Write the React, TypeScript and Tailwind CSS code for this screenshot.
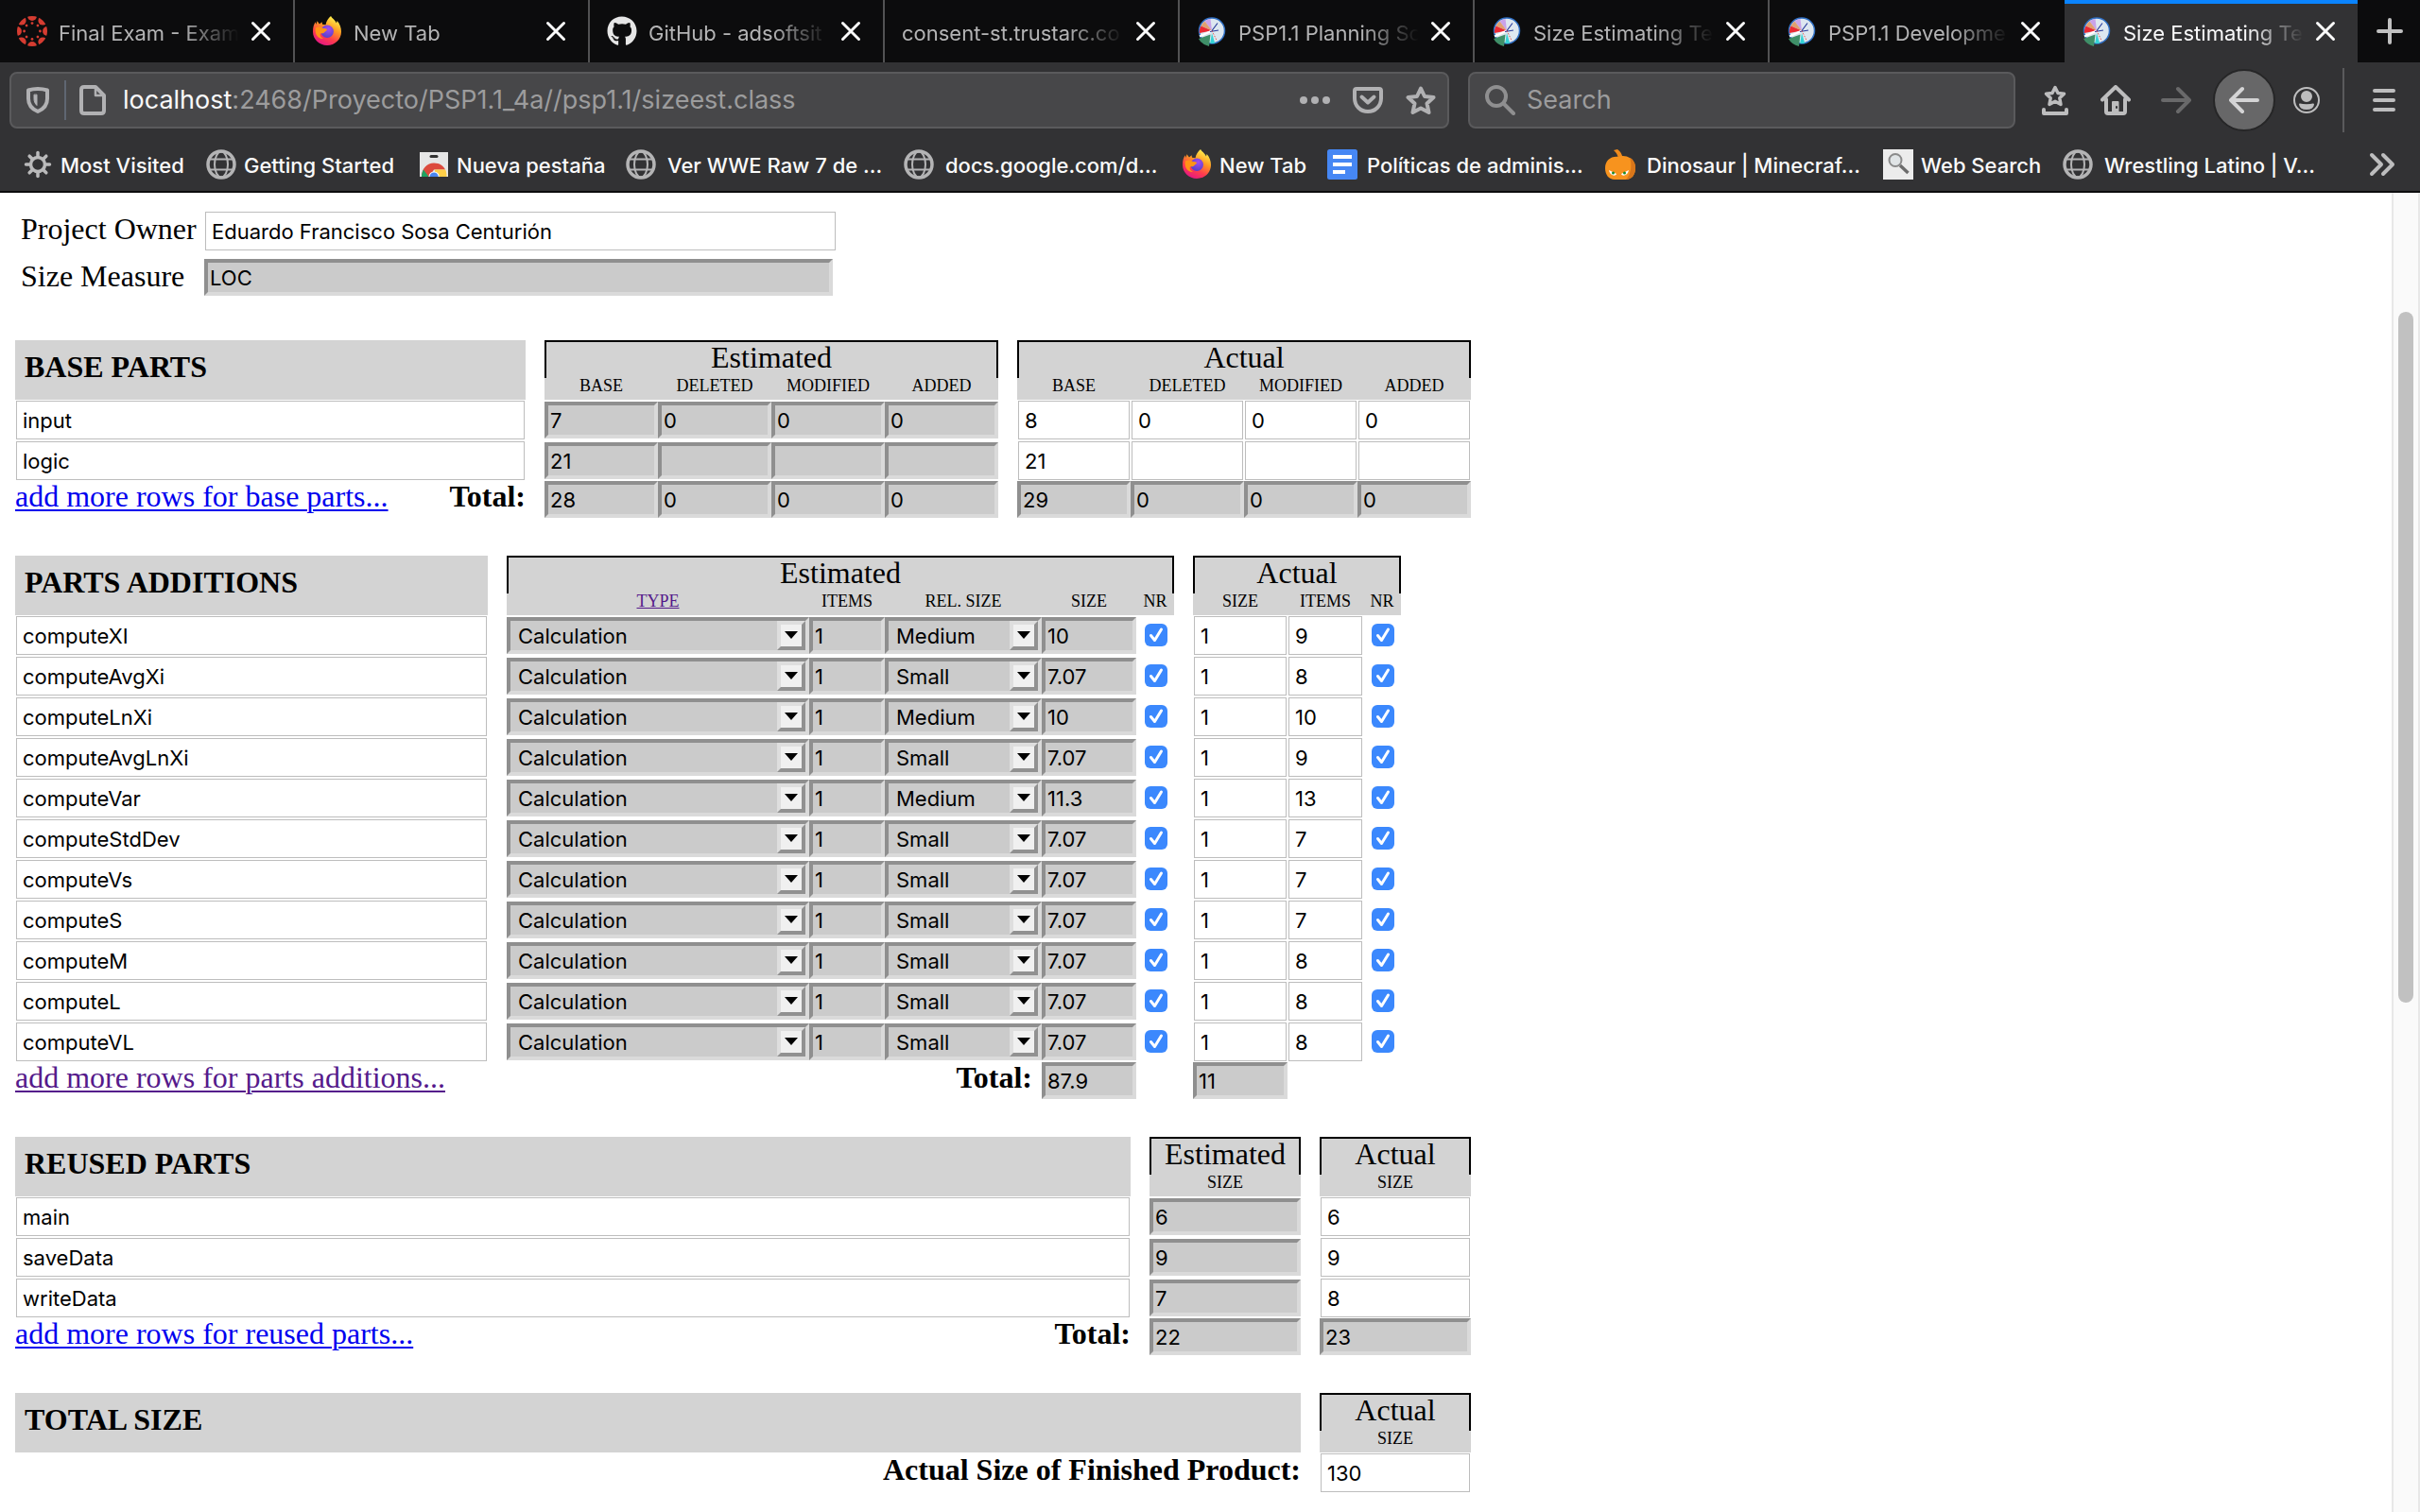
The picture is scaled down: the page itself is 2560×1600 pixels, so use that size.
import React, { useId } from "react";
import { FaGithub } from "react-icons/fa";

/* ---------- icons ---------- */

type IconName = "canvas" | "firefox" | "github" | "clock" | "gear" | "globe" | "chrome" | "docs" | "pumpkin" | "lens";

const EIGHTHS = [0, 45, 90, 135, 180, 225, 270, 315];

function CanvasIcon() {
  return (
    <svg viewBox="0 0 32 32" className="size-8 rounded-full" fill="#d63c31">
      {EIGHTHS.map((a) => (
        <g key={a} transform={`rotate(${a} 16 16)`}>
          <circle cx="16" cy="0" r="4.9" />
          <circle cx="16" cy="7.6" r="1.4" />
        </g>
      ))}
    </svg>
  );
}

function FirefoxIcon() {
  const id = useId();
  return (
    <svg viewBox="0 0 32 32" className="size-8">
      <defs>
        <linearGradient id={id + "a"} x1="0.8" y1="0" x2="0.3" y2="1">
          <stop offset="0.05" stopColor="#fff44f" />
          <stop offset="0.4" stopColor="#ff9a22" />
          <stop offset="0.7" stopColor="#ff3d4c" />
          <stop offset="1" stopColor="#e31587" />
        </linearGradient>
        <radialGradient id={id + "b"} cx="0.6" cy="0.3" r="0.8">
          <stop offset="0" stopColor="#a44bf0" />
          <stop offset="1" stopColor="#4a3fc4" />
        </radialGradient>
      </defs>
      <path
        d="M20 0c1.2 2.300 4.500 4.200 6 7.500l.6-2.500c2.900 3.300 4.400 7.400 4.400 11.500 0 8.300-6.700 14.500-15 14.500S1 24.500 1 16.500C1 12 2 8.500 3.800 6.200L4.500 9l1-3.800L8 8.500l2.500-2.300.5 2.500 3.500.6C15 5.500 17.500 2 20 0z"
        fill={`url(#${id}a)`}
      />
      <circle cx="16.200" cy="16.300" r="6.700" fill={`url(#${id}b)`} />
      <path
        d="M3.800 12.500c3-1.500 5.500-1 7.200.2 2 .2 4.500.3 5 1.500-.2 1.500-2.500 2-3 3.300-1 .8-2.500 1-3.800.8-1.500 2.200.5 4.500 3 5.700-6 .5-9.500-5-8.400-11.500z"
        fill="#ff9416"
      />
    </svg>
  );
}

function ClockIcon() {
  return (
    <svg viewBox="0 0 32 32" className="size-8">
      <circle cx="16" cy="15.500" r="13.500" fill="#dde7f0" stroke="#2f6fc4" strokeWidth="1.500" />
      <path d="M16 15.500L8.500 5.500A12.500 12.500 0 0 1 14.500 3z" fill="#c9a2ea" />
      <path d="M16 15.500L4.500 10.500A13 13 0 0 1 8.500 5.500z" fill="#e0a070" />
      <path d="M16 15.500L2.800 18A13 13 0 0 1 4.500 10.500z" fill="#ea2a34" />
      <path d="M14.500 19.500L2 24q3 6 11 8z" fill="#3f8f68" />
      <path d="M16 18l-1.800 10.800a13 13 0 0 0 5 0z" fill="#35d3d6" />
      <path d="M16 15.500L3 21.500" stroke="#fff" strokeWidth="2" />
      <path d="M16 15.500l6-8M14 16.500l9-1.500" stroke="#2a3c9c" strokeWidth="1.200" />
      <path d="M16 15.500l5.500 11" stroke="#e2574c" strokeWidth="1" strokeDasharray="1.500 1.500" />
    </svg>
  );
}

function GearIcon() {
  return (
    <svg viewBox="0 0 32 32" className="size-8" fill="none" stroke="#bababb">
      <circle cx="16" cy="16" r="7.500" strokeWidth="3.500" />
      {EIGHTHS.map((a) => (
        <path key={a} d="M16 7.500V3.500" strokeWidth="3.500" strokeLinecap="round" transform={`rotate(${a} 16 16)`} />
      ))}
    </svg>
  );
}

function GlobeIcon() {
  return (
    <svg viewBox="0 0 32 32" className="size-8" fill="none" stroke="#b4b4b5">
      <circle cx="16" cy="16" r="14" strokeWidth="3.500" />
      <ellipse cx="16" cy="16" rx="7" ry="13.500" strokeWidth="2" />
      <path d="M4 10.500h24M4 21.500h24" strokeWidth="2" />
    </svg>
  );
}

function ChromeIcon() {
  return (
    <svg viewBox="0 0 32 32" className="size-8">
      <path d="M1 3h30v26H1z" fill="#e6e6e6" />
      <rect x="11.500" y="6" width="9" height="3" rx="1.500" fill="#333" />
      <path d="M3 29C3 20 9 14.500 16 14.500c6 0 10 2.800 12 7H16l-5 7.500z" fill="#dc4a3d" />
      <path d="M3 29c0-3 .8-5.500 2-7.500L10.500 29z" fill="#1ea362" />
      <path d="M17 21.500h11.200c1 2.200 1.300 5 1.300 7.500H17z" fill="#ffcf48" />
      <path d="M10.500 29a5.600 5.600 0 0 1 11.200 0z" fill="#fff" />
      <path d="M11.500 29a4.600 4.600 0 0 1 9.200 0z" fill="#4a86f0" />
    </svg>
  );
}

function DocsIcon() {
  return (
    <svg viewBox="0 0 32 32" className="size-8">
      <rect width="32" height="32" rx="2.500" fill="#4687f4" />
      <path d="M6 6h20v4H6zM6 14h20v4H6zM6 22h13v4H6z" fill="#fff" />
    </svg>
  );
}

function PumpkinIcon() {
  return (
    <svg viewBox="0 0 32 32" className="size-8">
      <path d="M9 1l4-1c3 2 5 5 5.500 9h-5c0-3-1.500-5-4.500-8z" fill="#ef8a1b" />
      <path d="M14 8c4-2 9-1 12 1 4 2 6 6 6 11 0 7-4 12-10 12H10C4 32 0 27 0 20 0 12 6 7 14 8z" fill="#f7931e" />
      <path d="M26 9c4 2 6 6 6 11 0 7-4 12-10 12 5-5 7-15 4-23z" fill="#d9761a" />
      <path d="M4 22l8 4c-1 3-7 2-8-4zM25 22l-8 4c1 3 7 2 8-4z" fill="#fff" />
      <circle cx="8.500" cy="25" r="1.500" fill="#1b8a2a" />
      <circle cx="20.500" cy="25" r="1.500" fill="#1b8a2a" />
    </svg>
  );
}

function LensIcon() {
  return (
    <svg viewBox="0 0 32 32" className="size-8">
      <path d="M0 0h32v32H0z" fill="#ececec" />
      <circle cx="13" cy="11.500" r="6.500" fill="#e0e4e6" stroke="#8a8a8a" strokeWidth="2" />
      <path d="M18 17l8.500 8" stroke="#6c6c6c" strokeWidth="3.500" />
    </svg>
  );
}

function SiteIcon({ name }: { name: IconName }) {
  switch (name) {
    case "canvas":
      return <CanvasIcon />;
    case "firefox":
      return <FirefoxIcon />;
    case "github":
      return <FaGithub className="size-8 text-[#e6e6e6]" />;
    case "clock":
      return <ClockIcon />;
    case "gear":
      return <GearIcon />;
    case "globe":
      return <GlobeIcon />;
    case "chrome":
      return <ChromeIcon />;
    case "docs":
      return <DocsIcon />;
    case "pumpkin":
      return <PumpkinIcon />;
    default:
      return <LensIcon />;
  }
}

function Line({ children, color = "#bdbdbe", width = 4 }: { children: React.ReactNode; color?: string; width?: number }) {
  return (
    <svg viewBox="0 0 32 32" className="size-8 shrink-0" fill="none" stroke={color} strokeWidth={width} strokeLinecap="round" strokeLinejoin="round">
      {children}
    </svg>
  );
}

/* ---------- browser window ---------- */

const TABS: { title: string; icon?: IconName; active?: boolean }[] = [
  { title: "Final Exam - Exam", icon: "canvas" },
  { title: "New Tab", icon: "firefox" },
  { title: "GitHub - adsoftsit", icon: "github" },
  { title: "consent-st.trustarc.co" },
  { title: "PSP1.1 Planning Sc", icon: "clock" },
  { title: "Size Estimating Te", icon: "clock" },
  { title: "PSP1.1 Developme", icon: "clock" },
  { title: "Size Estimating Te", icon: "clock", active: true },
];

function TabStrip() {
  return (
    <div className="flex h-[66px] bg-[#0c0c0d]">
      {TABS.map((tab, i) => (
        <div
          key={i}
          className={
            "flex min-w-0 flex-1 items-center gap-3 border-r-2 pr-[23px] pl-[18px] " +
            (tab.active
              ? "border-r-[#0c0c0d] bg-[#323234] text-[#f9f9fa] shadow-[inset_0_4px_0_#0a84ff]"
              : i === 6
                ? "border-r-[#0c0c0d] text-[#b4b4b5]"
                : "border-r-[#525253] text-[#b4b4b5]")
          }
        >
          {tab.icon && <SiteIcon name={tab.icon} />}
          <span className="mt-1 min-w-0 flex-1 overflow-hidden text-[22px] leading-8 whitespace-nowrap [mask-image:linear-gradient(to_right,black_calc(100%-60px),transparent)]">
            {tab.title}
          </span>
          <button type="button" aria-label="Close tab" className="shrink-0">
            <svg viewBox="0 0 22 22" className="size-[22px]" stroke="#fbfbfb" strokeWidth="3" strokeLinecap="round">
              <path d="M2.500 2.500l17 17M19.500 2.500l-17 17" />
            </svg>
          </button>
        </div>
      ))}
      <button type="button" aria-label="New tab" className="flex w-16 items-center justify-center">
        <Line color="#c0c0c0">
          <path d="M16 4v24M4 16h24" />
        </Line>
      </button>
    </div>
  );
}

function Toolbar() {
  return (
    <div className="flex h-20 items-center pl-2.5 text-[27px]">
      <div className="flex h-[60px] min-w-0 flex-[1495] items-center rounded-lg border-2 border-[#5a5a5c] bg-[#474749] pr-3 pl-3">
        <button type="button" aria-label="Tracking protection">
          <Line color="#b1b1b3">
            <path d="M16 4c4 0 7 .5 10 1.500v9c0 6-4 11-10 13.500C10 25.500 6 20.500 6 14.500v-9C9 4.500 12 4 16 4z" />
            <path d="M15 10.500v11c-2-2-3-4-3-7v-4z" fill="#b1b1b3" strokeWidth="1" />
          </Line>
        </button>
        <span className="mx-3 h-[42px] w-0.5 bg-[#5f6672]" />
        <button type="button" aria-label="Site information">
          <Line color="#b1b1b3">
            <path d="M7 2h12l9 9v16q0 3-3 3H7q-3 0-3-3V5q0-3 3-3z" />
            <path d="M19 3v8h8" strokeWidth="2.500" />
          </Line>
        </button>
        <div className="ml-4 min-w-0 flex-1 truncate text-[#9c9c9d]">
          <span className="text-[#f9f9fa]">localhost</span>:2468/Proyecto/PSP1.1_4a//psp1.1/sizeest.class
        </div>
        <div className="flex items-center gap-6">
          <button type="button" aria-label="Page actions">
            <svg viewBox="0 0 32 32" className="size-8" fill="#b1b1b3">
              <circle cx="4" cy="16" r="4" />
              <circle cx="16" cy="16" r="4" />
              <circle cx="28" cy="16" r="4" />
            </svg>
          </button>
          <button type="button" aria-label="Save to Pocket">
            <Line color="#b1b1b3">
              <path d="M4 4h24q2 0 2 2v8c0 8-6 14-14 14S2 22 2 14V6q0-2 2-2z" />
              <path d="M9.500 12.500l6.500 6 6.500-6" />
            </Line>
          </button>
          <button type="button" aria-label="Bookmark this page">
            <Line color="#b1b1b3">
              <path d="M16 3.500l4 8.500 9.500 1-7 6.500 2 9.500-8.500-4.500L7.500 29l2-9.500-7-6.500 9.500-1z" />
            </Line>
          </button>
        </div>
      </div>

      <label className="ml-5 flex h-[60px] min-w-0 flex-[559] items-center rounded-lg border-2 border-[#5a5a5c] bg-[#474749] pl-4">
        <Line color="#8f8f90">
          <circle cx="12" cy="12" r="10" />
          <path d="M19.500 19.500L30 30" />
        </Line>
        <input
          type="text"
          aria-label="Search"
          placeholder="Search"
          className="ml-3 min-w-0 flex-1 bg-transparent placeholder:text-[#9c9c9d] focus:outline-none"
        />
      </label>

      <button type="button" aria-label="Bookmarks menu" className="ml-2.5 flex w-16 justify-center">
        <Line>
          <path d="M16 2.500l3 6 6.500.8-4.700 4.500 1.200 6.700-6-3.200-6 3.200 1.200-6.700L6.500 9.300 13 8.500z" strokeWidth="3.500" />
          <path d="M4 26v4h24v-4" />
        </Line>
      </button>
      <button type="button" aria-label="Home" className="flex w-16 justify-center">
        <Line>
          <path d="M2 15.500L16 2l14 13.500M6 15v13q0 2 2 2h16q2 0 2-2V15" />
          <path d="M15 18h3.500v12H13V18z" fill="#bdbdbe" strokeWidth="2" />
          <path d="M17 23v1" stroke="#323234" strokeWidth="2" />
        </Line>
      </button>
      <button type="button" aria-label="Forward" className="flex w-16 justify-center">
        <Line color="#69696a">
          <path d="M2 16h28M18 4l12 12-12 12" />
        </Line>
      </button>
      <div className="flex w-20 justify-center">
        <button type="button" aria-label="Back" className="flex size-[66px] items-center justify-center rounded-full border-2 border-[#262627] bg-[#676768]">
          <Line color="#d4d4d5">
            <path d="M30 16H2M14 4L2 16l12 12" />
          </Line>
        </button>
      </div>
      <button type="button" aria-label="Account" className="flex w-[52px] justify-center">
        <Line width={2}>
          <circle cx="16" cy="16" r="13" />
          <circle cx="16" cy="12" r="5" fill="#bdbdbe" />
          <path d="M9 20.500c3 1 11 1 14 0-1 6-13 6-14 0z" fill="#bdbdbe" />
        </Line>
      </button>
      <span className="ml-3 h-[68px] w-0.5 bg-[#5a5a5c]" />
      <button type="button" aria-label="Open menu" className="flex w-20 justify-center pl-1">
        <Line>
          <path d="M6 6h20M6 16h20M6 26h20" />
        </Line>
      </button>
    </div>
  );
}

const BOOKMARKS: { label: string; icon: IconName; width: string }[] = [
  { label: "Most Visited", icon: "gear", width: "w-[194px] gap-2" },
  { label: "Getting Started", icon: "globe", width: "w-[225px] gap-2" },
  { label: "Nueva pestaña", icon: "chrome", width: "w-[219px] gap-2" },
  { label: "Ver WWE Raw 7 de ...", icon: "globe", width: "w-[294px] gap-3" },
  { label: "docs.google.com/d...", icon: "globe", width: "w-[294px] gap-3" },
  { label: "New Tab", icon: "firefox", width: "w-[154px] gap-2" },
  { label: "Políticas de adminis...", icon: "docs", width: "w-[294px] gap-2.5" },
  { label: "Dinosaur | Minecraf...", icon: "pumpkin", width: "w-[294px] gap-3" },
  { label: "Web Search", icon: "lens", width: "w-[190px] gap-2" },
  { label: "Wrestling Latino | V...", icon: "globe", width: "w-[290px] gap-3" },
];

function BookmarksBar() {
  return (
    <div className="flex h-14 items-center pr-6 pl-6 text-[22px] font-medium text-[#fbfbfb]">
      {BOOKMARKS.map((b, i) => (
        <button key={i} type="button" className={"flex shrink-0 items-center whitespace-nowrap " + b.width}>
          <SiteIcon name={b.icon} />
          <span className="mt-0.5">{b.label}</span>
        </button>
      ))}
      <button type="button" aria-label="More bookmarks" className="ml-auto">
        <Line>
          <path d="M5 6l10 10L5 26M17 6l10 10-10 10" />
        </Line>
      </button>
    </div>
  );
}

/* ---------- form controls ---------- */

function White({ label, value, className = "w-full", id }: { label?: string; value: string; className?: string; id?: string }) {
  return (
    <input
      id={id}
      type="text"
      aria-label={label}
      defaultValue={value}
      className={"block h-[41px] border border-[#bdbdbd] bg-white px-1.5 font-[Inter,sans-serif] text-[22px] text-black " + className}
    />
  );
}

function Grey({ label, value, className = "w-full", id }: { label?: string; value: string; className?: string; id?: string }) {
  return (
    <input
      id={id}
      type="text"
      readOnly
      aria-label={label}
      defaultValue={value}
      className={
        "block h-[39px] border-4 border-t-[#8f8f8f] border-r-[#dadada] border-b-[#dadada] border-l-[#8f8f8f] bg-[#cbcbcb] px-0.5 font-[Inter,sans-serif] text-[22px] text-black " +
        className
      }
    />
  );
}

function Choice({ label, value, options }: { label: string; value: string; options: string[] }) {
  return (
    <div className="relative">
      <select
        aria-label={label}
        defaultValue={value}
        className="block h-[39px] w-full appearance-none border-4 border-t-[#8f8f8f] border-r-[#dadada] border-b-[#dadada] border-l-[#8f8f8f] bg-[#cbcbcb] pl-2 font-[Inter,sans-serif] text-[22px] leading-[30px] text-black"
      >
        {options.map((o) => (
          <option key={o}>{o}</option>
        ))}
      </select>
      <span className="pointer-events-none absolute top-1 right-1 flex h-[31px] w-[30px] justify-center border-4 border-t-[#dedede] border-r-[#919191] border-b-[#919191] border-l-[#dedede] bg-[#f0f0f0] pt-[7px]">
        <svg viewBox="0 0 14 8" className="h-2 w-3.5">
          <path d="M0 0h14L7 8z" />
        </svg>
      </span>
    </div>
  );
}

function Check({ label }: { label: string }) {
  return (
    <div className="relative mb-0.5 ml-[9px] size-6">
      <input type="checkbox" aria-label={label} defaultChecked className="block size-6 appearance-none rounded-md bg-[#3b88fd]" />
      <svg viewBox="0 0 24 24" className="pointer-events-none absolute inset-0 size-6" fill="none" stroke="#fff" strokeWidth="3" strokeLinecap="round" strokeLinejoin="round">
        <path d="M6.500 12.500l4 5L17.500 6" />
      </svg>
    </div>
  );
}

/* ---------- table pieces ---------- */

function Title({ children, span = 1 }: { children: string; span?: number }) {
  return (
    <th rowSpan={2} colSpan={span} scope="col" className="bg-[#d3d3d3] pt-2.5 pl-2.5 text-left align-top text-[32px] leading-9 font-bold">
      {children}
    </th>
  );
}

function Group({ children, span = 1 }: { children: string; span?: number }) {
  return (
    <th colSpan={span} scope="colgroup" className="h-10 border-x-2 border-t-2 border-black bg-[#d3d3d3] text-center align-top text-[32px] leading-8 font-normal">
      {children}
    </th>
  );
}

function Sub({ children }: { children: React.ReactNode }) {
  return (
    <th scope="col" className="h-[23px] bg-[#d3d3d3] text-center align-top text-[18px] leading-4 font-normal whitespace-nowrap">
      {children}
    </th>
  );
}

const GAP = <td />;

function MoreRows({ children, visited }: { children: string; visited?: boolean }) {
  return (
    <a href="#" className={"underline decoration-2 underline-offset-[3px] " + (visited ? "text-[#551a8b]" : "text-[#0000ee]")}>
      {children}
    </a>
  );
}

const TABLE = "mt-10 table-fixed border-separate border-spacing-0 text-[32px] leading-8";

function BaseParts() {
  const cols = ["BASE", "DELETED", "MODIFIED", "ADDED"];
  const rows = [
    { name: "input", est: ["7", "0", "0", "0"], act: ["8", "0", "0", "0"] },
    { name: "logic", est: ["21", "", "", ""], act: ["21", "", "", ""] },
  ];
  return (
    <table className={TABLE + " w-[1540px]"}>
      <colgroup>
        <col className="w-[540px]" />
        <col className="w-5" />
        <col span={4} className="w-[120px]" />
        <col className="w-5" />
        <col span={4} className="w-[120px]" />
      </colgroup>
      <thead>
        <tr>
          <Title>BASE PARTS</Title>
          {GAP}
          <Group span={4}>Estimated</Group>
          {GAP}
          <Group span={4}>Actual</Group>
        </tr>
        <tr>
          {GAP}
          {cols.map((c) => (
            <Sub key={c}>{c}</Sub>
          ))}
          {GAP}
          {cols.map((c) => (
            <Sub key={c}>{c}</Sub>
          ))}
        </tr>
      </thead>
      <tbody>
        {rows.map((r) => (
          <tr key={r.name} className="h-[43px]">
            <td className="px-px">
              <White label="Base part" value={r.name} />
            </td>
            {GAP}
            {r.est.map((v, i) => (
              <td key={i}>
                <Grey label={"Estimated " + cols[i]} value={v} />
              </td>
            ))}
            {GAP}
            {r.act.map((v, i) => (
              <td key={i} className="px-px">
                <White label={"Actual " + cols[i]} value={v} />
              </td>
            ))}
          </tr>
        ))}
        <tr className="align-top">
          <td>
            <div className="flex justify-between">
              <MoreRows>add more rows for base parts...</MoreRows>
              <b>Total:</b>
            </div>
          </td>
          {GAP}
          {["28", "0", "0", "0"].map((v, i) => (
            <td key={i}>
              <Grey label={"Total estimated " + cols[i]} value={v} />
            </td>
          ))}
          {GAP}
          {["29", "0", "0", "0"].map((v, i) => (
            <td key={i}>
              <Grey label={"Total actual " + cols[i]} value={v} />
            </td>
          ))}
        </tr>
      </tbody>
    </table>
  );
}

const ADDITIONS: [string, string, string, string][] = [
  ["computeXI", "Medium", "10", "9"],
  ["computeAvgXi", "Small", "7.07", "8"],
  ["computeLnXi", "Medium", "10", "10"],
  ["computeAvgLnXi", "Small", "7.07", "9"],
  ["computeVar", "Medium", "11.3", "13"],
  ["computeStdDev", "Small", "7.07", "7"],
  ["computeVs", "Small", "7.07", "7"],
  ["computeS", "Small", "7.07", "7"],
  ["computeM", "Small", "7.07", "8"],
  ["computeL", "Small", "7.07", "8"],
  ["computeVL", "Small", "7.07", "8"],
];

function PartsAdditions() {
  return (
    <table className={TABLE + " w-[1466px]"}>
      <colgroup>
        <col className="w-[500px]" />
        <col className="w-5" />
        <col className="w-[320px]" />
        <col className="w-20" />
        <col className="w-[166px]" />
        <col className="w-[100px]" />
        <col className="w-10" />
        <col className="w-5" />
        <col className="w-[100px]" />
        <col className="w-20" />
        <col className="w-10" />
      </colgroup>
      <thead>
        <tr>
          <Title>PARTS ADDITIONS</Title>
          {GAP}
          <Group span={5}>Estimated</Group>
          {GAP}
          <Group span={3}>Actual</Group>
        </tr>
        <tr>
          {GAP}
          <Sub>
            <a href="#" className="text-[#551a8b] underline">
              TYPE
            </a>
          </Sub>
          <Sub>ITEMS</Sub>
          <Sub>REL. SIZE</Sub>
          <Sub>SIZE</Sub>
          <Sub>NR</Sub>
          {GAP}
          <Sub>SIZE</Sub>
          <Sub>ITEMS</Sub>
          <Sub>NR</Sub>
        </tr>
      </thead>
      <tbody>
        {ADDITIONS.map(([name, rel, size, items]) => (
          <tr key={name} className="h-[43px]">
            <td className="px-px">
              <White label="Part addition" value={name} />
            </td>
            {GAP}
            <td>
              <Choice label="Type" value="Calculation" options={["Calculation", "Data", "I/O", "Logic", "Set-up", "Text"]} />
            </td>
            <td>
              <Grey label="Estimated items" value="1" />
            </td>
            <td>
              <Choice label="Relative size" value={rel} options={["Very Small", "Small", "Medium", "Large", "Very Large"]} />
            </td>
            <td>
              <Grey label="Estimated size" value={size} />
            </td>
            <td>
              <Check label="Estimated new reusable" />
            </td>
            {GAP}
            <td className="px-px">
              <White label="Actual size" value="1" />
            </td>
            <td className="px-px">
              <White label="Actual items" value={items} />
            </td>
            <td>
              <Check label="Actual new reusable" />
            </td>
          </tr>
        ))}
        <tr className="align-top">
          <td>
            <MoreRows visited>add more rows for parts additions...</MoreRows>
          </td>
          {GAP}
          <td colSpan={3} className="pr-2.5 text-right font-bold">
            Total:
          </td>
          <td>
            <Grey label="Total estimated size" value="87.9" />
          </td>
          <td colSpan={2} />
          <td>
            <Grey label="Total actual size" value="11" />
          </td>
          <td colSpan={2} />
        </tr>
      </tbody>
    </table>
  );
}

function ReusedParts() {
  const rows = [
    ["main", "6", "6"],
    ["saveData", "9", "9"],
    ["writeData", "7", "8"],
  ];
  return (
    <table className={TABLE + " w-[1540px]"}>
      <colgroup>
        <col className="w-[1180px]" />
        <col className="w-5" />
        <col className="w-40" />
        <col className="w-5" />
        <col className="w-40" />
      </colgroup>
      <thead>
        <tr>
          <Title>REUSED PARTS</Title>
          {GAP}
          <Group>Estimated</Group>
          {GAP}
          <Group>Actual</Group>
        </tr>
        <tr>
          {GAP}
          <Sub>SIZE</Sub>
          {GAP}
          <Sub>SIZE</Sub>
        </tr>
      </thead>
      <tbody>
        {rows.map(([name, est, act]) => (
          <tr key={name} className="h-[43px]">
            <td className="px-px">
              <White label="Reused part" value={name} />
            </td>
            {GAP}
            <td>
              <Grey label="Estimated size" value={est} />
            </td>
            {GAP}
            <td className="px-px">
              <White label="Actual size" value={act} />
            </td>
          </tr>
        ))}
        <tr className="align-top">
          <td>
            <div className="flex justify-between">
              <MoreRows>add more rows for reused parts...</MoreRows>
              <b>Total:</b>
            </div>
          </td>
          {GAP}
          <td>
            <Grey label="Total estimated size" value="22" />
          </td>
          {GAP}
          <td>
            <Grey label="Total actual size" value="23" />
          </td>
        </tr>
      </tbody>
    </table>
  );
}

function TotalSize() {
  return (
    <table className={TABLE + " w-[1540px]"}>
      <colgroup>
        <col className="w-[1360px]" />
        <col className="w-5" />
        <col className="w-40" />
      </colgroup>
      <thead>
        <tr>
          <Title>TOTAL SIZE</Title>
          {GAP}
          <Group>Actual</Group>
        </tr>
        <tr>
          {GAP}
          <Sub>SIZE</Sub>
        </tr>
      </thead>
      <tbody>
        <tr className="h-[43px]">
          <td className="text-right align-top leading-9 font-bold">
            <label htmlFor="finished">Actual Size of Finished Product:</label>
          </td>
          {GAP}
          <td className="px-px">
            <White id="finished" value="130" />
          </td>
        </tr>
      </tbody>
    </table>
  );
}

export default function App() {
  return (
    <div className="flex min-h-screen flex-col overflow-hidden bg-white font-[Inter,sans-serif] text-black">
      <header className="border-b-2 border-[#0c0c0d] bg-[#323234]">
        <TabStrip />
        <Toolbar />
        <BookmarksBar />
      </header>
      <div className="flex flex-1">
        <main className="min-w-0 flex-1 pt-5 pl-4 font-['Liberation_Serif',serif] text-[32px] leading-9">
          <form>
            <div className="mb-[47px] flex flex-col gap-2 pl-1.5">
              <div className="flex h-[42px] items-start">
                <label htmlFor="owner" className="w-[195px]">
                  Project Owner
                </label>
                <White id="owner" value="Eduardo Francisco Sosa Centurión" className="w-[667px]" />
              </div>
              <div className="flex items-start">
                <label htmlFor="measure" className="w-[194px]">
                  Size Measure
                </label>
                <Grey id="measure" value="LOC" className="w-[665px]" />
              </div>
            </div>
            <BaseParts />
            <PartsAdditions />
            <ReusedParts />
            <TotalSize />
          </form>
        </main>
        <div className="flex w-[30px] justify-center border-x-2 border-[#e8e8e8] bg-[#fafafa] pt-[126px]">
          <div className="h-[731px] w-4 rounded-full bg-[#c1c1c1]" />
        </div>
      </div>
    </div>
  );
}
